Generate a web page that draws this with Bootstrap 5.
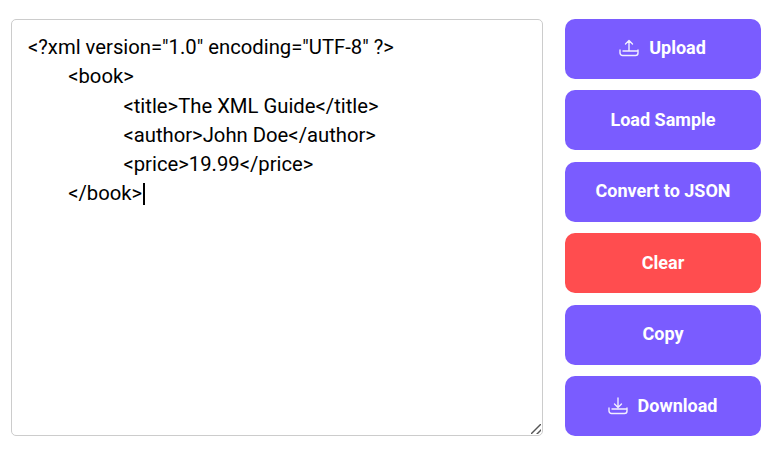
<!DOCTYPE html>
<html lang="en">
<head>
<meta charset="utf-8">
<title>XML to JSON</title>
<link href="https://cdn.jsdelivr.net/npm/bootstrap@5.3.0/dist/css/bootstrap.min.css" rel="stylesheet">
<style>
html, body { height: 450px; overflow: hidden; background: #fff; }
.shell { height: 450px; padding: 19px 9px 14px 11px; gap: 22px; font-family: Roboto, sans-serif; }
.editor-wrap { width: 532px; }
.xml-editor.form-control {
  width: 100%; height: 100%; padding: 13px 16px; border: 1px solid #ccc; border-radius: 5px;
  font: 400 20.25px/29.25px Roboto, sans-serif; color: #000; caret-color: #000; white-space: pre; box-shadow: none;
}
.xml-editor.form-control:focus { border-color: #ccc; box-shadow: none; outline: 0; }
.xml-editor::-webkit-resizer {
  background: linear-gradient(135deg, transparent 44%, #555 46%, #555 54%, transparent 56%, transparent 74%, #555 76%, #555 84%, transparent 86%) no-repeat right 1px bottom 1px / 10px 10px;
}
.caret-mark { position: absolute; left: 132px; top: 164px; width: 2px; height: 22px; background: #000; }
.side-actions { width: 196px; gap: 11.5px; }
.act-btn.btn {
  height: 60px; border: 0; border-radius: 10px; font: 700 18px/1 Roboto, sans-serif; color: #fff;
  background: #7a5cff; gap: 10px; padding: 5px 12px 6px;
}
.act-btn.with-glyph.btn { padding-right: 13px; }
.act-btn.danger { background: #ff4d4f; }
.act-btn svg { width: 20px; height: 18px; fill: none; stroke: #fff; stroke-width: 1.4; stroke-linecap: round; stroke-linejoin: round; opacity: .9; }
</style>
</head>
<body class="m-0">
<main class="shell d-flex">
  <div class="editor-wrap position-relative">
    <textarea class="xml-editor form-control" spellcheck="false" aria-label="XML input"><?xml version="1.0" encoding="UTF-8" ?>
        <book>
                   <title>The XML Guide</title>
                   <author>John Doe</author>
                   <price>19.99</price>
        </book></textarea>
    <span class="caret-mark"></span>
  </div>
  <div class="side-actions d-flex flex-column">
    <button class="act-btn with-glyph btn d-flex align-items-center justify-content-center" type="button">
      <svg viewBox="0 0 20 18"><path d="M10 11V1.500M6.500 5 10 1.500 13.500 5M1 11v3a2.500 2.500 0 0 0 2.500 2.500h13A2.500 2.500 0 0 0 19 14v-3M4 12h15"/></svg>Upload</button>
    <button class="act-btn btn d-flex align-items-center justify-content-center" type="button">Load Sample</button>
    <button class="act-btn btn d-flex align-items-center justify-content-center" type="button">Convert to JSON</button>
    <button class="act-btn danger btn d-flex align-items-center justify-content-center" type="button">Clear</button>
    <button class="act-btn btn d-flex align-items-center justify-content-center" type="button">Copy</button>
    <button class="act-btn with-glyph btn d-flex align-items-center justify-content-center" type="button">
      <svg viewBox="0 0 20 18"><path d="M10 1v9.500M6.500 7 10 10.500 13.500 7M1 11v3a2.500 2.500 0 0 0 2.500 2.500h13A2.500 2.500 0 0 0 19 14v-3M4 12h15"/></svg>Download</button>
  </div>
</main>
<script src="https://cdn.jsdelivr.net/npm/bootstrap@5.3.0/dist/js/bootstrap.bundle.min.js"></script>
</body>
</html>
